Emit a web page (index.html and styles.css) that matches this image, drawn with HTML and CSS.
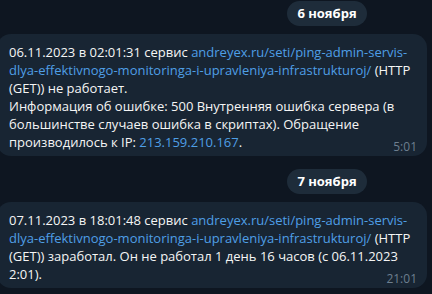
FILE: index.html
```html
<!DOCTYPE html>
<html lang="ru">
<head>
<meta charset="UTF-8" />
<meta name="viewport" content="width=device-width, initial-scale=1" />
<title>Ping-Admin</title>
<link rel="stylesheet" href="styles.css">
</head>
<body>

<div class="chat">
  <div class="day">
    <span class="day-pill">6 ноября</span>
  </div>
  <div class="bubble">
    <div class="text">
      06.11.2023 в 02:01:31 сервис <a href="#">andreyex.ru/seti/ping-admin-servis-<br>dlya-effektivnogo-monitoringa-i-upravleniya-infrastrukturoj/</a> (HTTP<br>
      (GET)) не работает.<br>
      Информация об ошибке: 500 Внутренняя ошибка сервера (в<br>
      большинстве случаев ошибка в скриптах). Обращение<br>
      производилось к IP: <a href="#">213.159.210.167</a>.
    </div>
    <span class="time">5:01</span>
  </div>

  <div class="day">
    <span class="day-pill">7 ноября</span>
  </div>
  <div class="bubble">
    <div class="text">
      07.11.2023 в 18:01:48 сервис <a href="#">andreyex.ru/seti/ping-admin-servis-<br>dlya-effektivnogo-monitoringa-i-upravleniya-infrastrukturoj/</a> (HTTP<br>
      (GET)) заработал. Он не работал 1 день 16 часов (с 06.11.2023<br>
      2:01).
    </div>
    <span class="time">21:01</span>
  </div>
</div>

</body>
</html>
```

FILE: styles.css
```css
body {
  margin: 0;
  padding: 0;
  background: #0e1621;
  color: #f5f5f5;
  font-family: "Open Sans", "Noto Sans", sans-serif;
  font-size: 13px;
  overflow: hidden;
}
.chat {
  display: flex;
  flex-direction: column;
  padding-top: 1px;
}
.day {
  display: flex;
  justify-content: flex-end;
  padding-right: 65px;
  margin-bottom: 8px;
}
.bubble + .day {
  margin-top: 13px;
}
.day-pill {
  display: block;
  width: 80px;
  height: 25px;
  line-height: 25px;
  text-align: center;
  background: #1e2c3a;
  border-radius: 13px;
  font-weight: bold;
  color: #ffffff;
}
.bubble {
  position: relative;
  margin-left: -3px;
  width: 430px;
  box-sizing: border-box;
  padding: 9px 12px 5px;
  background: #182533;
  border-radius: 14px;
}
.text {
  line-height: 18px;
  white-space: nowrap;
}
.text a {
  color: #4f9fe6;
  text-decoration: none;
}
.time {
  position: absolute;
  right: 10px;
  bottom: 2px;
  font-size: 12px;
  line-height: 14px;
  color: #6d7f8f;
}
```
